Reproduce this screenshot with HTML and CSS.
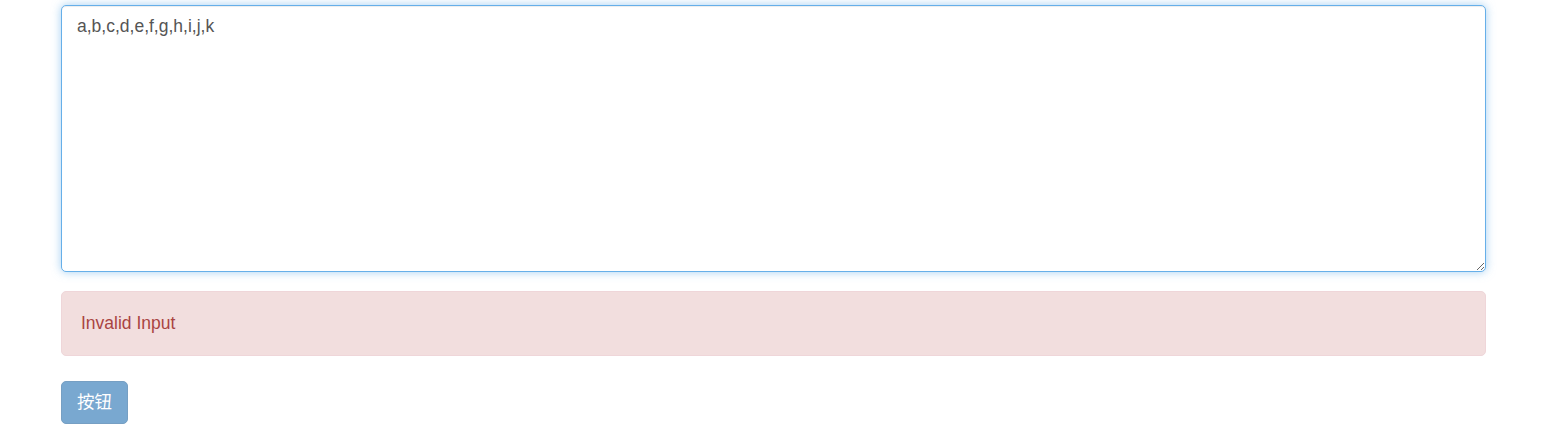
FILE: index.html
```html
<!DOCTYPE html>
<html lang="zh">
<head>
<meta charset="utf-8">
<title>Form</title>
<link rel="stylesheet" href="styles.css">
</head>
<body>
<div class="container">
  <div class="form-group">
    <textarea class="form-control">a,b,c,d,e,f,g,h,i,j,k</textarea>
  </div>
  <div class="alert">Invalid Input</div>
  <button class="btn" disabled>按钮</button>
</div>
</body>
</html>
```
FILE: styles.css
```css
html, body {
  margin: 0;
  padding: 0;
  background: #fff;
}
body {
  font-family: "Liberation Sans", Arial, "Noto Sans CJK SC", sans-serif;
  font-size: 17.5px;
  line-height: 25px;
  color: #333;
}
.container {
  width: 1425px;
  margin-left: 61px;
  padding-top: 5px;
}
.form-group {
  margin-bottom: 19px;
}
.form-control {
  display: block;
  box-sizing: border-box;
  width: 100%;
  height: 267px;
  margin: 0;
  padding: 7.5px 15px;
  font-family: inherit;
  font-size: 17.5px;
  line-height: 25px;
  color: #555;
  background: #fff;
  border: 1.25px solid #66afe9;
  border-radius: 5px;
  outline: 0;
  resize: vertical;
  box-shadow: inset 0 1px 1px rgba(0,0,0,.075), 0 0 10px rgba(102,175,233,.6);
}
.alert {
  box-sizing: border-box;
  height: 65px;
  padding: 18.75px 18.75px 18.75px 19px;
  margin-bottom: 25px;
  color: #a94442;
  background: #f2dede;
  border: 1.25px solid #efd6d9;
  border-radius: 5px;
}
.btn {
  display: inline-block;
  box-sizing: border-box;
  height: 43px;
  padding: 7.5px 15px;
  font-family: "Liberation Sans", Arial, "Noto Sans CJK SC", sans-serif;
  font-size: 17.5px;
  line-height: 25px;
  color: #fff;
  background: #337ab7;
  border: 1.25px solid #2e6da4;
  border-radius: 5px;
  opacity: .65;
  cursor: not-allowed;
}
```
